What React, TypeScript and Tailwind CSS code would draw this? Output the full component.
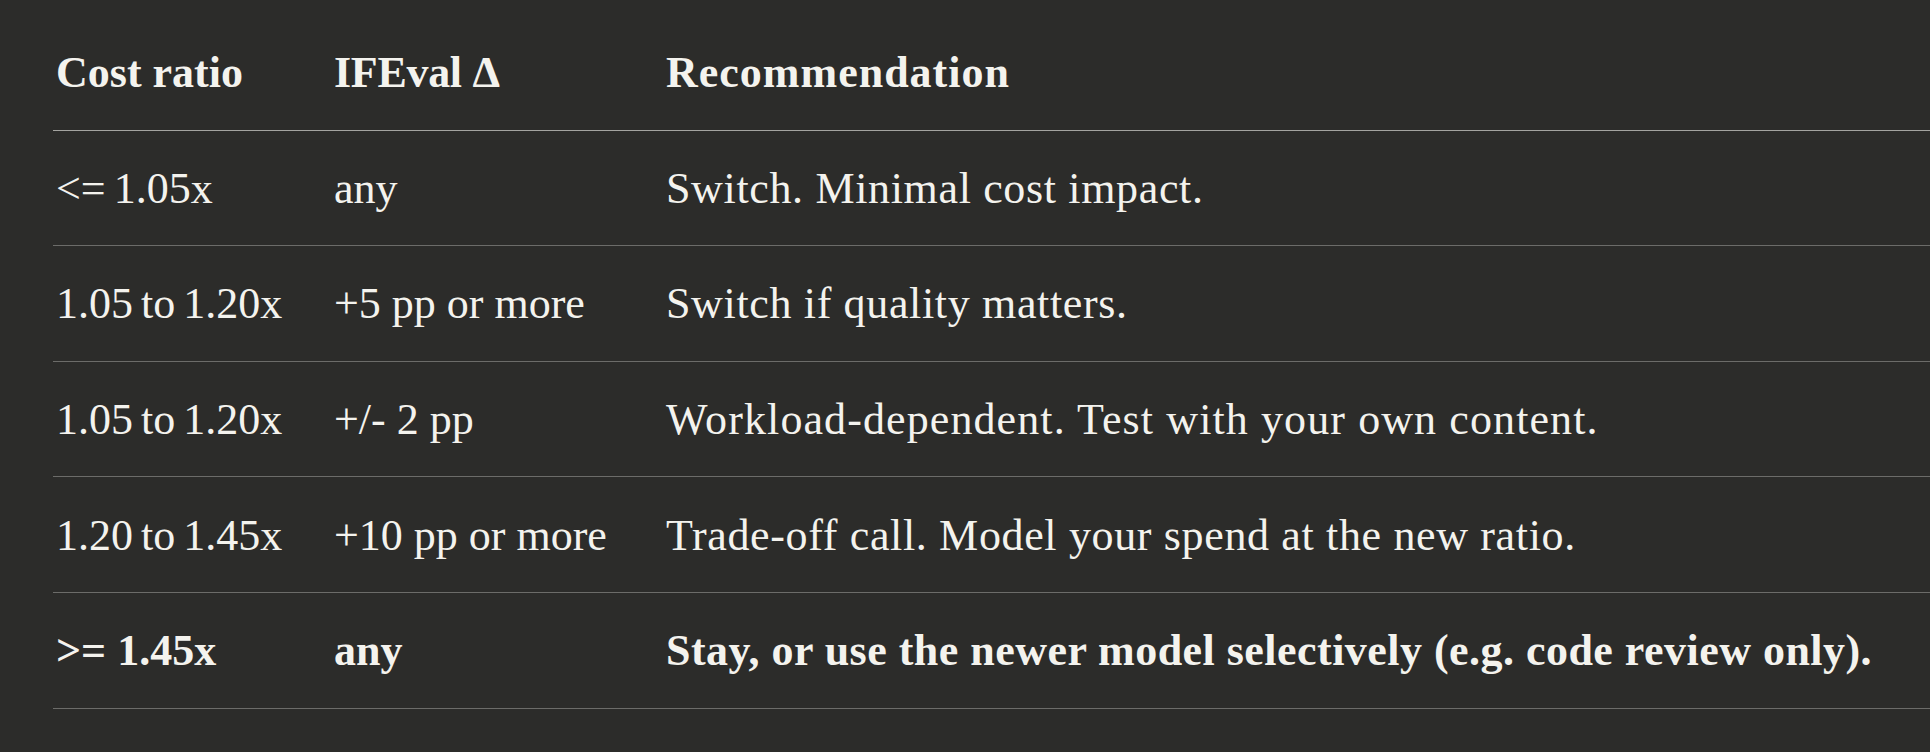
import React from "react";

const rows: { a: string; b: string; c: string; bold?: boolean; t: string }[] = [
  { a: "<= 1.05x", b: "any", c: "Switch. Minimal cost impact.", t: "tracking-[0.65px]" },
  { a: "1.05 to 1.20x", b: "+5 pp or more", c: "Switch if quality matters.", t: "tracking-[0.65px]" },
  { a: "1.05 to 1.20x", b: "+/- 2 pp", c: "Workload-dependent. Test with your own content.", t: "tracking-[1.1px]" },
  { a: "1.20 to 1.45x", b: "+10 pp or more", c: "Trade-off call. Model your spend at the new ratio.", t: "tracking-[0.65px]" },
  { a: ">= 1.45x", b: "any", c: "Stay, or use the newer model selectively (e.g. code review only).", bold: true, t: "tracking-[0.47px]" },
];

export default function App() {
  return (
    <div
      className="min-h-[752px] w-full overflow-hidden bg-[#2c2c2a] pl-[53px] pt-[15px] text-[#f4f3ee]"
      style={{ fontFamily: '"Liberation Serif", "Times New Roman", serif' }}
    >
      <div className="w-[1877px]">
        <div className="grid h-[115.6px] grid-cols-[278px_332px_1fr] items-center border-b border-[#a4a4a0] pt-[2px] text-[44px] font-bold">
          <div className="pl-[3px] leading-none">Cost ratio</div>
          <div className="pl-[3px] leading-none tracking-[-0.3px]">IFEval Δ</div>
          <div className="pl-[3px] leading-none tracking-[1px]">Recommendation</div>
        </div>
        {rows.map((r, i) => (
          <div
            key={i}
            className={
              "grid h-[115.6px] grid-cols-[278px_332px_1fr] items-center border-b border-[#6c6c69] pt-[2px] text-[44px] " +
              (r.bold ? "font-bold" : "font-normal")
            }
          >
            <div className={"pl-[3px] leading-none whitespace-nowrap " + (r.bold ? "" : "[word-spacing:-3px]")}>{r.a}</div>
            <div className="pl-[3px] leading-none whitespace-nowrap">{r.b}</div>
            <div className={"pl-[3px] leading-none whitespace-nowrap " + r.t}>{r.c}</div>
          </div>
        ))}
      </div>
    </div>
  );
}
